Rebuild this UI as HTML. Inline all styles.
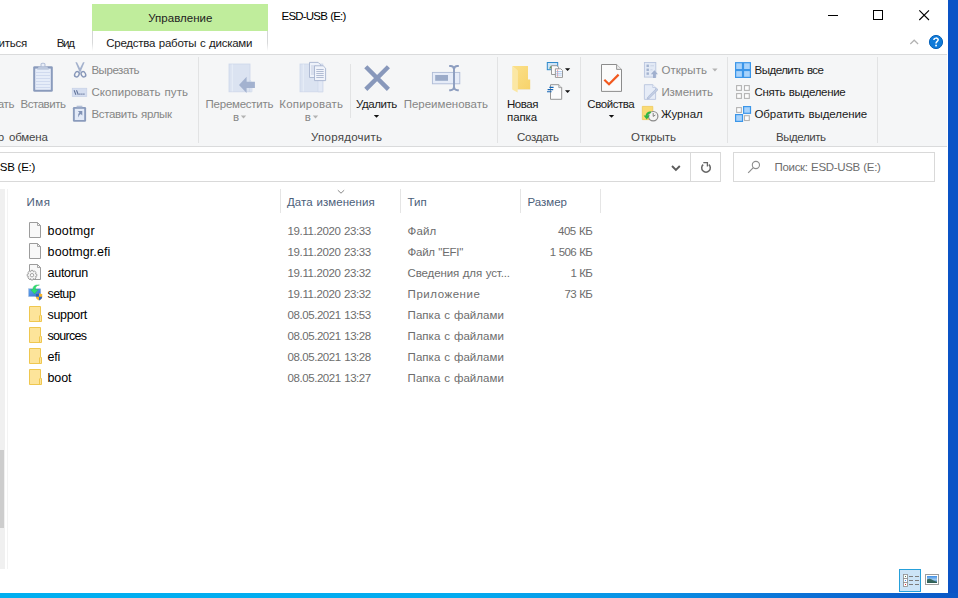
<!DOCTYPE html>
<html>
<head>
<meta charset="utf-8">
<style>
*{box-sizing:border-box;margin:0;padding:0}
html,body{width:958px;height:598px;overflow:hidden}
body{font-family:"Liberation Sans",sans-serif;font-size:12px;color:#1e1e1e;background:#0a53c6;position:relative}
.a{position:absolute;white-space:nowrap}
svg.a{overflow:visible}
#desk-b{left:0;top:593px;width:958px;height:5px;background:linear-gradient(90deg,#00aff0 0,#03abef 48%,#0a90e4 68%,#0c6fd5 85%,#0a57c6 100%)}
#desk-r{left:948px;top:0;width:10px;height:593px;background:#0a53c6}
#win{left:0;top:0;width:948px;height:593px;background:#fff}
#gtab{left:92px;top:4px;width:176px;height:27px;background:#c0ed9c}
#ribbon{left:0;top:54px;width:947px;height:93px;background:#f5f6f7;border-top:1px solid #dadbdc;border-bottom:1px solid #dadbdc}
.sep{width:1px;background:#e2e3e4;top:57px;height:86px}
.t{font-size:11.5px;line-height:14px}
.bx{border:1px solid #d9d9d9;background:#fff}
.cd{width:1px;background:#e5e5e5;top:189px;height:24px}
</style>
</head>
<body>
<div id="win" class="a"></div>
<div id="desk-r" class="a"></div>
<div id="desk-b" class="a"></div>

<!-- title / tabs -->
<div id="gtab" class="a"></div>
<div class="a" style="left:92px;top:31px;width:176px;height:23px;background:#fff"></div><div class="a" style="left:92px;top:31px;width:1px;height:20px;background:linear-gradient(#d4d5d6,#d8d9da 60%,#fff)"></div><div class="a" style="left:267px;top:31px;width:1px;height:20px;background:linear-gradient(#d4d5d6,#d8d9da 60%,#fff)"></div>

<div id="ribbon" class="a"></div>
<div class="a sep" style="left:198px"></div>
<div class="a sep" style="left:497px"></div>
<div class="a sep" style="left:580px"></div>
<div class="a sep" style="left:727px"></div>
<div class="a sep" style="left:877px"></div>
<div class="a" style="left:350px;top:64px;width:1px;height:54px;background:#e2e3e4"></div>

<!-- address + search -->
<div class="a bx" style="left:-2px;top:152px;width:723px;height:30px"></div>
<div class="a" style="left:690px;top:153px;width:1px;height:28px;background:#d9d9d9"></div>
<div class="a bx" style="left:733px;top:152px;width:202px;height:30px"></div>

<!-- nav pane sliver -->
<div class="a" style="left:0;top:189px;width:5px;height:380px;background:#f0f0f0"></div>
<div class="a" style="left:0;top:450px;width:4px;height:78px;background:#cdcdcd"></div>
<div class="a" style="left:7px;top:189px;width:1px;height:380px;background:#f3f3f3"></div>

<!-- column dividers -->
<div class="a cd" style="left:280px"></div>
<div class="a cd" style="left:400px"></div>
<div class="a cd" style="left:520px"></div>
<div class="a cd" style="left:600px"></div>

<div class="a t" style="left:148.30px;top:11.20px;color:#222;letter-spacing:0.018px">Управление</div>
<div class="a t" style="left:281.50px;top:9.20px;color:#000;letter-spacing:-0.792px;word-spacing:0.7px">ESD-USB (E:)</div>
<div class="a t" style="left:56.80px;top:36.20px;color:#1a1a1a;letter-spacing:-1.347px">Вид</div>
<div class="a t" style="left:106.30px;top:36.20px;color:#1a1a1a;letter-spacing:-0.259px;word-spacing:0.7px">Средства работы с дисками</div>
<div class="a t" style="left:20.50px;top:97.20px;color:#868686;letter-spacing:-0.465px">Вставить</div>
<div class="a t" style="left:91.40px;top:63.20px;color:#868686;letter-spacing:-0.437px">Вырезать</div>
<div class="a t" style="left:91.40px;top:85.20px;color:#868686;letter-spacing:0.052px;word-spacing:0.7px">Скопировать путь</div>
<div class="a t" style="left:91.40px;top:107.20px;color:#868686;letter-spacing:-0.327px;word-spacing:0.7px">Вставить ярлык</div>
<div class="a t" style="left:9.00px;top:130.20px;color:#454545;letter-spacing:-0.197px">обмена</div>
<div class="a t" style="left:205.60px;top:97.20px;color:#868686;letter-spacing:-0.256px">Переместить</div>
<div class="a t" style="left:233.00px;top:110.20px;color:#868686;letter-spacing:0.000px">в</div>
<div class="a t" style="left:279.30px;top:97.20px;color:#868686;letter-spacing:0.197px">Копировать</div>
<div class="a t" style="left:304.80px;top:110.20px;color:#868686;letter-spacing:0.000px">в</div>
<div class="a t" style="left:356.00px;top:97.20px;color:#1a1a1a;letter-spacing:-0.436px">Удалить</div>
<div class="a t" style="left:403.70px;top:97.20px;color:#868686;letter-spacing:-0.010px">Переименовать</div>
<div class="a t" style="left:311.00px;top:130.20px;color:#454545;letter-spacing:0.256px">Упорядочить</div>
<div class="a t" style="left:507.00px;top:97.20px;color:#1a1a1a;letter-spacing:-0.469px">Новая</div>
<div class="a t" style="left:507.00px;top:110.20px;color:#1a1a1a;letter-spacing:-0.084px">папка</div>
<div class="a t" style="left:517.00px;top:130.20px;color:#454545;letter-spacing:-0.285px">Создать</div>
<div class="a t" style="left:587.30px;top:97.20px;color:#1a1a1a;letter-spacing:-0.443px">Свойства</div>
<div class="a t" style="left:661.40px;top:63.20px;color:#868686;letter-spacing:0.071px">Открыть</div>
<div class="a t" style="left:661.40px;top:85.20px;color:#868686;letter-spacing:-0.040px">Изменить</div>
<div class="a t" style="left:661.00px;top:107.20px;color:#1a1a1a;letter-spacing:-0.050px">Журнал</div>
<div class="a t" style="left:631.00px;top:130.20px;color:#454545;letter-spacing:-0.029px">Открыть</div>
<div class="a t" style="left:754.50px;top:63.20px;color:#1a1a1a;letter-spacing:-0.507px;word-spacing:0.7px">Выделить все</div>
<div class="a t" style="left:754.50px;top:85.20px;color:#1a1a1a;letter-spacing:-0.301px;word-spacing:0.7px">Снять выделение</div>
<div class="a t" style="left:754.50px;top:107.20px;color:#1a1a1a;letter-spacing:-0.094px;word-spacing:0.7px">Обратить выделение</div>
<div class="a t" style="left:776.00px;top:130.20px;color:#454545;letter-spacing:-0.437px">Выделить</div>
<div class="a t" style="left:774.60px;top:160.20px;color:#6d6d6d;letter-spacing:-0.348px;word-spacing:0.7px">Поиск: ESD-USB (E:)</div>
<div class="a t" style="left:26.50px;top:195.20px;color:#4c607a;letter-spacing:0.514px">Имя</div>
<div class="a t" style="left:287.00px;top:195.20px;color:#4c607a;letter-spacing:0.040px;word-spacing:0.7px">Дата изменения</div>
<div class="a t" style="left:407.40px;top:195.20px;color:#4c607a;letter-spacing:0.128px">Тип</div>
<div class="a t" style="left:527.50px;top:195.20px;color:#4c607a;letter-spacing:-0.026px">Размер</div>
<div class="a t" style="left:47.60px;top:223.87px;color:#000;letter-spacing:0.184px;font-size:12.5px">bootmgr</div>
<div class="a t" style="left:287.60px;top:224.20px;color:#6d6d6d;letter-spacing:-0.385px;word-spacing:0.7px">19.11.2020 23:33</div>
<div class="a t" style="left:407.60px;top:224.20px;color:#6d6d6d;letter-spacing:0.112px">Файл</div>
<div class="a t" style="left:558.00px;top:224.20px;color:#6d6d6d;letter-spacing:-0.496px;word-spacing:0.7px">405 КБ</div>
<div class="a t" style="left:47.60px;top:244.87px;color:#000;letter-spacing:0.084px;font-size:12.5px">bootmgr.efi</div>
<div class="a t" style="left:287.60px;top:245.20px;color:#6d6d6d;letter-spacing:-0.385px;word-spacing:0.7px">19.11.2020 23:33</div>
<div class="a t" style="left:407.60px;top:245.20px;color:#6d6d6d;letter-spacing:-0.282px;word-spacing:0.7px">Файл &quot;EFI&quot;</div>
<div class="a t" style="left:549.70px;top:245.20px;color:#6d6d6d;letter-spacing:-0.639px;word-spacing:0.7px">1 506 КБ</div>
<div class="a t" style="left:47.60px;top:265.87px;color:#000;letter-spacing:-0.307px;font-size:12.5px">autorun</div>
<div class="a t" style="left:287.60px;top:266.20px;color:#6d6d6d;letter-spacing:-0.385px;word-spacing:0.7px">19.11.2020 23:32</div>
<div class="a t" style="left:407.60px;top:266.20px;color:#6d6d6d;letter-spacing:-0.140px;word-spacing:0.7px">Сведения для уст...</div>
<div class="a t" style="left:570.60px;top:266.20px;color:#6d6d6d;letter-spacing:-0.763px;word-spacing:0.7px">1 КБ</div>
<div class="a t" style="left:47.60px;top:286.87px;color:#000;letter-spacing:-0.632px;font-size:12.5px">setup</div>
<div class="a t" style="left:287.60px;top:287.20px;color:#6d6d6d;letter-spacing:-0.385px;word-spacing:0.7px">19.11.2020 23:32</div>
<div class="a t" style="left:407.60px;top:287.20px;color:#6d6d6d;letter-spacing:0.527px">Приложение</div>
<div class="a t" style="left:564.60px;top:287.20px;color:#6d6d6d;letter-spacing:-0.671px;word-spacing:0.7px">73 КБ</div>
<div class="a t" style="left:47.60px;top:307.87px;color:#000;letter-spacing:-0.353px;font-size:12.5px">support</div>
<div class="a t" style="left:287.60px;top:308.20px;color:#6d6d6d;letter-spacing:-0.442px;word-spacing:0.7px">08.05.2021 13:53</div>
<div class="a t" style="left:407.60px;top:308.20px;color:#6d6d6d;letter-spacing:0.028px;word-spacing:0.7px">Папка с файлами</div>
<div class="a t" style="left:47.60px;top:328.87px;color:#000;letter-spacing:-0.736px;font-size:12.5px">sources</div>
<div class="a t" style="left:287.60px;top:329.20px;color:#6d6d6d;letter-spacing:-0.442px;word-spacing:0.7px">08.05.2021 13:28</div>
<div class="a t" style="left:407.60px;top:329.20px;color:#6d6d6d;letter-spacing:0.028px;word-spacing:0.7px">Папка с файлами</div>
<div class="a t" style="left:47.60px;top:349.87px;color:#000;letter-spacing:-0.212px;font-size:12.5px">efi</div>
<div class="a t" style="left:287.60px;top:350.20px;color:#6d6d6d;letter-spacing:-0.442px;word-spacing:0.7px">08.05.2021 13:28</div>
<div class="a t" style="left:407.60px;top:350.20px;color:#6d6d6d;letter-spacing:0.028px;word-spacing:0.7px">Папка с файлами</div>
<div class="a t" style="left:47.60px;top:370.87px;color:#000;letter-spacing:-0.185px;font-size:12.5px">boot</div>
<div class="a t" style="left:287.60px;top:371.20px;color:#6d6d6d;letter-spacing:-0.442px;word-spacing:0.7px">08.05.2021 13:27</div>
<div class="a t" style="left:407.60px;top:371.20px;color:#6d6d6d;letter-spacing:0.028px;word-spacing:0.7px">Папка с файлами</div>
<div class="a t" style="left:-1.43px;top:36.20px;color:#1a1a1a;letter-spacing:-0.25px">иться</div>
<div class="a t" style="left:-2.31px;top:97.20px;color:#868686;letter-spacing:-0.25px">ать</div>
<div class="a t" style="left:-2.20px;top:130.20px;color:#454545;letter-spacing:-0.25px">р</div>
<div class="a t" style="left:-8.29px;top:160.20px;color:#000;letter-spacing:-0.25px">USB (E:)</div>
<!-- window controls -->
<svg class="a" style="left:0;top:0" width="958" height="598" viewBox="0 0 958 598">
<g id="winctl" fill="none" stroke="#000" stroke-width="1">
<path d="M828 15.5H838"/>
<rect x="873.5" y="10.5" width="9" height="9"/>
<path d="M919.3 10.3L929 20M929 10.3L919.3 20" stroke-width="1.1"/>
</g>
<path d="M910.3 44L914.2 40.2L918.1 44" fill="none" stroke="#b2b2b2" stroke-width="1.2"/>
<circle cx="936" cy="42" r="6.6" fill="#0f7ad8" stroke="#0863bb" stroke-width="1"/>
<path d="M933.9 39.9C933.9 37.6 938.2 37.5 938.2 39.8C938.2 41.4 936 41.5 936 43.4" fill="none" stroke="#fff" stroke-width="1.5"/>
<rect x="935.2" y="44.7" width="1.7" height="1.7" fill="#fff"/>

<!-- PASTE clipboard (disabled) -->
<g id="paste">
<rect x="33.2" y="66.2" width="19.6" height="25.6" rx="1.4" fill="#8a9bbc"/>
<rect x="35.2" y="68.6" width="15.6" height="21.2" fill="#e6edf9"/>
<path d="M36 72.5H50M36 75.5H50M36 78.5H50M36 81.5H50M36 84.5H50M36 87.5H50" stroke="#d0daef" stroke-width="1"/>
<path d="M37 69.8L38.8 66.4H47.2L49 69.8Z" fill="#bcc8de"/>
<rect x="41" y="63.2" width="4" height="3.6" rx="1.4" fill="#e9eef8" stroke="#b3bfd7" stroke-width="1.1"/>
</g>

<!-- SCISSORS -->
<g id="cut">
<path d="M75.4 62.3L77 62.3L81.4 71L79.4 71.8Z" fill="#a3b1cd"/>
<path d="M84.6 62.3L83 62.3L78.6 71L80.6 71.8Z" fill="#a3b1cd"/>
<ellipse cx="76.9" cy="74.3" rx="2.1" ry="2.8" transform="rotate(30 76.9 74.3)" fill="none" stroke="#8797b9" stroke-width="1.4"/>
<ellipse cx="83.4" cy="74.3" rx="2.1" ry="2.8" transform="rotate(-30 83.4 74.3)" fill="none" stroke="#8797b9" stroke-width="1.4"/>
</g>

<!-- COPY PATH -->
<g id="cpath">
<rect x="72.2" y="88.2" width="14.6" height="8.4" fill="#d5def0" stroke="#c3cee4" stroke-width="0.6"/>
<path d="M74.1 90.2L75.9 94.8M76.5 90.2L78.3 94.8" stroke="#62749a" stroke-width="1.1"/>
<path d="M79.3 94.2h1.2M81.3 94.2h1.2M83.3 94.2h1.2" stroke="#62749a" stroke-width="1.2"/>
</g>

<!-- PASTE SHORTCUT -->
<g id="pshort">
<rect x="72.9" y="107" width="13.2" height="14.7" rx="1.2" fill="#8a9bbc"/>
<rect x="74.8" y="108.8" width="9.4" height="11.2" fill="#e3eaf7"/>
<rect x="76.6" y="105.7" width="5.8" height="1.6" fill="#b3bfd7"/>
<path d="M77.8 110.9H82.3V115.6L80.7 114Q78.9 115 78.6 117.4Q77.4 114.3 79.4 112.6Z" fill="#8293b6"/>
</g>

<!-- MOVE TO -->
<g id="move">
<rect x="229" y="64" width="21" height="27.8" fill="#dbe3f1" stroke="#cdd7ea" stroke-width="0.8"/>
<path d="M232.3 64.4V91.4" stroke="#e8eef8" stroke-width="1"/>
<path d="M250 80L252 83V91.8H250Z" fill="#e3e9f5" stroke="#cdd7ea" stroke-width="0.6"/>
<path d="M239 84.9L246.6 76.8V81.8H254.9V88H246.6V93Z" fill="#a3b2cf"/>
</g>

<!-- COPY TO -->
<g id="copyto">
<rect x="300" y="64" width="22.8" height="27.8" fill="#dbe3f1" stroke="#cdd7ea" stroke-width="0.8"/>
<path d="M303.3 64.4V91.4" stroke="#e8eef8" stroke-width="1"/>
<path d="M318 80H322.8V91.8H318Z" fill="#e3e9f5" stroke="#cdd7ea" stroke-width="0.6"/>
<path d="M309.5 62.4H318.2L320.6 64.8V77.5H309.5Z" fill="#eef2fa" stroke="#a7b4cf" stroke-width="0.9"/>
<path d="M311 66H316M311 68H316M311 70H316M311 72H316M311 74H316" stroke="#b9c4da" stroke-width="0.8"/>
<path d="M314.5 65.8H323.2L325.6 68.2V80.6H314.5Z" fill="#f1f4fb" stroke="#a7b4cf" stroke-width="0.9"/>
<path d="M316.3 69.5H323.7M316.3 71.5H323.7M316.3 73.5H323.7M316.3 75.5H323.7M316.3 77.5H323.7" stroke="#a9b5ce" stroke-width="0.9"/>
</g>

<!-- DELETE X -->
<path d="M365.8 66.8L388.4 89.4M388.4 66.8L365.8 89.4" stroke="#8898bb" stroke-width="4.4" fill="none"/>

<!-- RENAME -->
<g id="rename">
<rect x="432.4" y="72.4" width="27.4" height="11.4" fill="#e6ecf8" stroke="#aebbd6" stroke-width="0.9"/>
<rect x="435.2" y="75" width="12.8" height="5.8" fill="#9babc9"/>
<path d="M449.2 66H450.6Q453.6 66 454 69Q454.4 66 457.4 66H458.8M449.2 90.2H450.6Q453.6 90.2 454 87.2Q454.4 90.2 457.4 90.2H458.8M454 68V88.2" fill="none" stroke="#8c9dbf" stroke-width="1.9"/>
</g>

<!-- small dropdown arrows -->
<g fill="#b3b3b3">
<path d="M240.8 115.6h5.4l-2.7 2.8z"/>
<path d="M312.8 115.6h5.4l-2.7 2.8z"/>
<path d="M712.2 68.6h5.4l-2.7 2.8z"/>
</g>
<g fill="#111">
<path d="M373.8 115h5.4l-2.7 2.8z"/>
<path d="M608.8 115h5.4l-2.7 2.8z"/>
<path d="M565 68.2h5.2l-2.6 2.8z"/>
<path d="M565 90.2h5.2l-2.6 2.8z"/>
</g>

<defs>
<linearGradient id="fg" x1="0" y1="0" x2="1" y2="1"><stop offset="0" stop-color="#fbe08a"/><stop offset="1" stop-color="#f7d36b"/></linearGradient>
<linearGradient id="mon" x1="0" y1="0" x2="1" y2="1"><stop offset="0" stop-color="#62a4ee"/><stop offset="1" stop-color="#3472cf"/></linearGradient>
<linearGradient id="pic" x1="0" y1="0" x2="0" y2="1"><stop offset="0" stop-color="#3f8ee6"/><stop offset="0.5" stop-color="#9cc8ee"/><stop offset="1" stop-color="#2f6aa8"/></linearGradient>
<g id="fold"><path d="M0.5 0.5H11.5V9.5H12.5V15.5H0.5Z" fill="#fde49a" stroke="#efc74f" stroke-width="1"/><path d="M10.5 9.5V15" stroke="#efc74f" stroke-width="1"/></g>
<g id="file"><path d="M0.5 0.5H8.5L11.5 3.5V15.5H0.5Z" fill="#f8f8f8" stroke="#9c9c9c" stroke-width="1"/><path d="M8.5 0.5V3.5H11.5" fill="none" stroke="#9c9c9c" stroke-width="0.9"/></g>
</defs>

<!-- NEW FOLDER big -->
<g id="newfolder">
<path d="M512.2 66H528V79.6H530.2V89H517.3V70.5Z" fill="url(#fg)"/>
<path d="M512.2 66L517.6 70.6V92.6L512.2 89.6Z" fill="#fbe7a4"/>
<path d="M517.6 89H530.2V89.6H517.6Z" fill="#e9c35a" opacity="0.5"/>
</g>

<!-- NEW ITEM -->
<g id="newitem">
<rect x="547.3" y="62.5" width="10.4" height="7.2" fill="#cfe4f6" stroke="#2f8acb" stroke-width="1"/>
<path d="M549 68.5L551 65.5L552.5 67.5L554 66L556.5 68.5Z" fill="#5d9c5a"/>
<path d="M551.5 65.7H557L558.5 67.2V74.5H551.5Z" fill="#fafafa" stroke="#8e8e8e" stroke-width="0.9"/>
<path d="M555.4 68.8H560.8L562.5 70.5V77.4H555.4Z" fill="#fff" stroke="#8e8e8e" stroke-width="0.9"/>
<path d="M557.6 69.5V76.8" stroke="#e88" stroke-width="0.8"/>
<path d="M556.2 71.5H561.8M556.2 73.3H561.8M556.2 75.1H561.8" stroke="#8fb4e8" stroke-width="0.7"/>
</g>

<!-- EASY ACCESS -->
<g id="easy">
<path d="M550.5 84.7H558.8L561.7 87.6V99.3H550.5Z" fill="#fcfcfc" stroke="#969696" stroke-width="1"/>
<path d="M558.8 84.7V87.6H561.7" fill="#e6e6e6" stroke="#969696" stroke-width="0.8"/>
<path d="M549.4 87.4H553.6M547.6 89.6H553.2M547 91.7H551.6" stroke="#1766b5" stroke-width="1.1"/>
</g>

<!-- PROPERTIES -->
<g id="props">
<path d="M601.5 64.5H616.6L621.5 69.4V91.4H601.5Z" fill="#fbfbfb" stroke="#8c8c8c" stroke-width="1"/>
<path d="M616.6 64.5V69.4H621.5" fill="#ececec" stroke="#8c8c8c" stroke-width="0.9"/>
<path d="M604.3 79.8L609 84.2L618.6 74.6" fill="none" stroke="#f2591f" stroke-width="2.2"/>
</g>

<!-- OPEN (disabled) -->
<g id="open">
<rect x="644.4" y="62.5" width="11.4" height="14.6" fill="#e2e9f5" stroke="#b9c5de" stroke-width="0.9"/>
<rect x="646.5" y="64.6" width="2.4" height="2.4" fill="#a4b3d0"/><rect x="646.5" y="68.6" width="2.4" height="2.4" fill="#a4b3d0"/><rect x="646.5" y="72.4" width="2.4" height="2.4" fill="#a4b3d0"/>
<path d="M650.4 65.8H654M650.4 69.8H652.6" stroke="#c6d0e4" stroke-width="0.9"/>
<path d="M654.4 70.2L658 74.2H655.8V78H653V74.2H650.8Z" fill="#a0b0ce"/>
</g>

<!-- EDIT (disabled) -->
<g id="edit">
<path d="M644.4 84.7H652.8L655.6 87.5V99.4H644.4Z" fill="#e6ecf7" stroke="#b9c5de" stroke-width="0.9"/>
<path d="M652.8 84.7V87.5H655.6" fill="#f3f6fb" stroke="#b9c5de" stroke-width="0.8"/>
<path d="M656.6 88.3L658 89.7L649.2 98.4L647.2 99L647.8 97Z" fill="#c4cfe4" stroke="#aab8d4" stroke-width="0.7"/>
</g>

<!-- HISTORY -->
<g id="hist">
<path d="M642.3 106.4H652.8V119.6H642.3Z" fill="#fadb74" stroke="#eec650" stroke-width="0.7"/>
<circle cx="653.2" cy="116.2" r="4.7" fill="#f4f4f4" stroke="#8a8a8a" stroke-width="1.2"/>
<path d="M653.2 113V116.4L655.4 115" fill="none" stroke="#666" stroke-width="0.8"/>
<path d="M650.8 112.2Q646.6 112.6 646.6 116.2" fill="none" stroke="#2fb643" stroke-width="2"/>
<path d="M643.6 115.4H649.8L646.7 119.4Z" fill="#2fb643"/>
</g>

<!-- SELECT ALL -->
<g id="selall" fill="#a9d3fb" stroke="#3b96e9" stroke-width="1.2">
<rect x="735.6" y="62.7" width="6.9" height="6.9"/><rect x="743.5" y="62.7" width="6.9" height="6.9"/>
<rect x="735.6" y="70.5" width="6.9" height="6.9"/><rect x="743.5" y="70.5" width="6.9" height="6.9"/>
</g>
<!-- SELECT NONE -->
<g id="selnone" fill="#fdfdfd" stroke="#b4b4b4" stroke-width="1.1">
<rect x="736.6" y="85.6" width="4.8" height="4.8"/><rect x="744.5" y="85.6" width="4.8" height="4.8"/>
<rect x="736.6" y="93.6" width="4.8" height="4.8"/><rect x="744.5" y="93.6" width="4.8" height="4.8"/>
</g>
<!-- INVERT -->
<g id="selinv">
<rect x="736.6" y="107.6" width="4.8" height="4.8" fill="#fdfdfd" stroke="#b4b4b4" stroke-width="1.1"/>
<rect x="744.5" y="115.7" width="4.8" height="4.8" fill="#fdfdfd" stroke="#b4b4b4" stroke-width="1.1"/>
<rect x="743.6" y="106.6" width="6.9" height="6.7" fill="#a9d3fb" stroke="#3b96e9" stroke-width="1.2"/>
<rect x="735.6" y="114.6" width="6.9" height="6.8" fill="#a9d3fb" stroke="#3b96e9" stroke-width="1.2"/>
</g>

<!-- ADDRESS BAR -->
<path d="M672 166L675.9 169.9L679.8 166" fill="none" stroke="#5c5c5c" stroke-width="1.9"/>
<g id="refresh" fill="none" stroke="#666" stroke-width="1.5">
<path d="M708.8 164.6A4.3 4.3 0 1 1 703.2 164.6"/>
<path d="M703.3 162.6H707.4V166.6" stroke-width="1.3"/>
</g>
<g id="mag" fill="none">
<circle cx="755.9" cy="165" r="3.6" stroke="#8d8d8d" stroke-width="1.1"/>
<path d="M753.3 167.7L748.2 172.8" stroke="#8d8d8d" stroke-width="1.2"/>
</g>
<!-- sort chevron -->
<path d="M337.8 190.2L341 193.2L344.2 190.2" fill="none" stroke="#8a8a8a" stroke-width="1"/>

<!-- FILE LIST ICONS -->
<use href="#file" x="29" y="222"/>
<use href="#file" x="29" y="243"/>
<use href="#file" x="29" y="264"/>
<g id="gear" fill="#f4f4f4" stroke="#9a9a9a" stroke-width="0.9">
<path d="M31 270.4h2l0.4 1.4l1.3 -0.7l1.4 1.4l-0.7 1.3l1.4 0.4v2l-1.4 0.4l0.7 1.3l-1.4 1.4l-1.3 -0.7l-0.4 1.4h-2l-0.4 -1.4l-1.3 0.7l-1.4 -1.4l0.7 -1.3l-1.4 -0.4v-2l1.4 -0.4l-0.7 -1.3l1.4 -1.4l1.3 0.7z"/>
<circle cx="32" cy="275.2" r="1.7" fill="#fff"/>
</g>
<g id="setup">
<rect x="28.7" y="288.8" width="12" height="7.7" fill="url(#mon)" stroke="#8fb0dc" stroke-width="0.5"/>
<path d="M39.4 285Q35 285.6 35.4 289.6H38.4L34.5 294L30.6 289.6H32.9Q32.6 284.2 39.4 285Z" fill="#2ee070" stroke="#22b556" stroke-width="0.4"/>
<path d="M39 293.2Q40.8 294.2 42.2 294V297Q42 299.4 39 300.6Q36 299.4 35.8 297V294Q37.2 294.2 39 293.2Z" fill="#f7b52c"/>
<path d="M39 293.2Q37.2 294.2 35.8 294V296.8H39Z" fill="#2a63c6"/>
<path d="M39 296.8H42.2V297Q42 299.4 39 300.6Z" fill="#2a63c6"/>
</g>
<use href="#fold" x="29" y="306"/>
<use href="#fold" x="29" y="327"/>
<use href="#fold" x="29" y="348"/>
<use href="#fold" x="29" y="369"/>

<!-- VIEW BUTTONS -->
<rect x="899.5" y="569.5" width="21" height="22" fill="#cce4f7" stroke="#26a0da" stroke-width="1"/>
<g fill="#fff" stroke="#8c8c8c" stroke-width="0.8">
<rect x="903.4" y="574.4" width="4" height="4"/><rect x="903.4" y="578.4" width="4" height="4"/><rect x="903.4" y="582.4" width="4" height="4"/>
</g>
<rect x="905" y="576" width="1" height="1" fill="#4a7a5a"/><rect x="905" y="580" width="1" height="1" fill="#4a8af0"/><rect x="905" y="584" width="1" height="1" fill="#e03030"/>
<path d="M909 576.5H913M915 576.5H919M909 580.5H913M915 580.5H919M909 584.5H913M915 584.5H919" stroke="#7d7d7d" stroke-width="1"/>
<rect x="925.5" y="574.5" width="13" height="10" fill="#fff" stroke="#9d9d9d" stroke-width="1"/>
<rect x="927" y="576" width="10" height="7" fill="url(#pic)"/>
<path d="M927 583V579.5Q930 577.6 933 580.2L937 582V583Z" fill="#2e5c46" opacity="0.85"/>
</svg>

</body>
</html>
